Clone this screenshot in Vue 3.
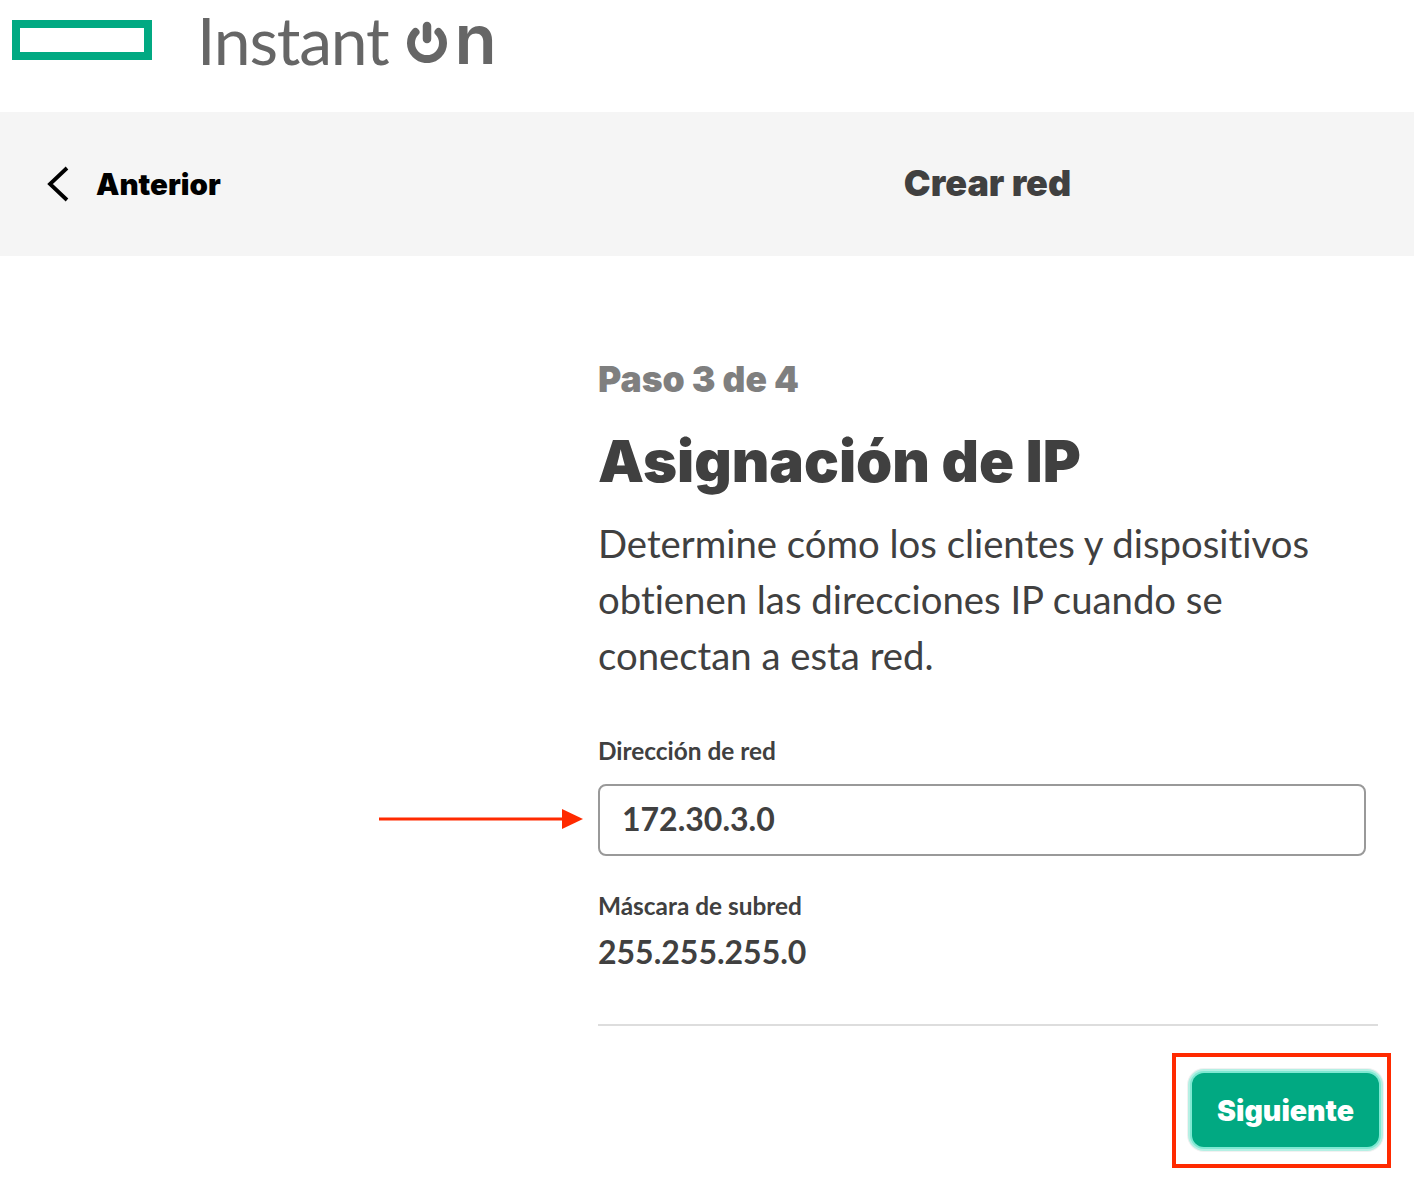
<script setup>
const pasoActual = 3
const pasosTotal = 4
</script>

<template>
  <div class="pagina">
    <header class="cabecera">
      <div class="logo-hpe"></div>
      <div class="marca">
        <span class="marca-texto">Instant</span>
        <svg class="marca-power" viewBox="0 0 40 42" width="40" height="42">
          <path d="M8.5 11 A16 16 0 1 0 31.5 11" fill="none" stroke="#666" stroke-width="8" stroke-linecap="round" />
          <path d="M20 5 V18" fill="none" stroke="#666" stroke-width="8.5" stroke-linecap="round" />
        </svg>
        <span class="marca-n">n</span>
      </div>
    </header>

    <nav class="barra">
      <div class="volver">
        <svg viewBox="0 0 24 38" width="24" height="38">
          <path d="M21 3 L4 19 L21 35" fill="none" stroke="#000" stroke-width="3.8" />
        </svg>
        <span>Anterior</span>
      </div>
      <div class="barra-titulo">Crear red</div>
    </nav>

    <main class="contenido">
      <div class="paso">Paso {{ pasoActual }} de {{ pasosTotal }}</div>
      <h1 class="titulo">Asignación de IP</h1>
      <p class="descripcion">
        Determine cómo los clientes y dispositivos<br />
        obtienen las direcciones IP cuando se<br />
        conectan a esta red.
      </p>

      <label class="etiqueta etiqueta-red">Dirección de red</label>
      <div class="campo-caja">
        <svg class="flecha" viewBox="0 0 204 22" width="204" height="22">
          <path d="M0 11 H184" stroke="#ff2a00" stroke-width="3" />
          <path d="M183 1 L204 11 L183 21 Z" fill="#ff2a00" />
        </svg>
        <input class="campo" value="172.30.3.0" />
      </div>

      <div class="etiqueta etiqueta-mascara">Máscara de subred</div>
      <div class="valor">255.255.255.0</div>

      <div class="pie">
        <button class="btn-siguiente">Siguiente</button>
        <div class="marco-rojo"></div>
      </div>
    </main>
  </div>
</template>

<style>
html, body { background: #fff; }
</style>

<style scoped>
.pagina {
  width: 1414px;
  height: 1202px;
  overflow: hidden;
  font-family: Lato, "Open Sans", sans-serif;
  font-variant-ligatures: none;
  color: #404040;
}
.cabecera {
  height: 112px;
  display: flex;
  align-items: flex-start;
  padding-left: 12px;
  box-sizing: border-box;
}
.logo-hpe {
  width: 140px;
  height: 40px;
  margin-top: 20px;
  border: 8px solid #01a982;
  box-sizing: border-box;
}
.marca {
  margin-left: 45px;
  display: flex;
  align-items: flex-start;
  color: #666;
}
.marca-texto {
  font-family: Lato, sans-serif;
  font-weight: 400;
  font-size: 66px;
  line-height: 80px;
  letter-spacing: -1.2px;
}
.marca-power {
  margin-left: 19px;
  margin-top: 21px;
}
.marca-n {
  font-family: Inter, sans-serif;
  font-weight: 600;
  font-size: 69px;
  line-height: 84px;
  margin-top: -3px;
  margin-left: 7px;
}
.barra {
  height: 144px;
  background: #f5f5f5;
  position: relative;
  display: flex;
  align-items: center;
  justify-content: center;
}
.volver {
  position: absolute;
  left: 46px;
  top: 53px;
  display: flex;
  align-items: center;
  gap: 26px;
  font-family: Inter, sans-serif;
  font-weight: 900;
  font-size: 29.5px;
  color: #000;
}
.barra-titulo {
  margin-left: 561px;
  margin-top: -3px;
  font-family: Inter, sans-serif;
  font-weight: 900;
  font-size: 36px;
  color: #404040;
}
.contenido {
  width: 780px;
  margin-left: 598px;
  padding-top: 100px;
}
.paso {
  font-family: Inter, sans-serif;
  font-weight: 900;
  font-size: 35.5px;
  line-height: 48px;
  color: #7f7f7f;
}
.titulo {
  margin: 20px 0 0;
  font-family: Inter, sans-serif;
  font-weight: 900;
  font-size: 58px;
  line-height: 74px;
  color: #404040;
}
.descripcion {
  margin: 17px 0 0;
  font-size: 38.3px;
  line-height: 56px;
  color: #404040;
}
.etiqueta {
  display: block;
  font-size: 24.4px;
  line-height: 32px;
  font-weight: 700;
  color: #404040;
}
.etiqueta-red { margin-top: 52px; }
.campo-caja {
  position: relative;
  margin-top: 17px;
  width: 768px;
}
.campo {
  display: block;
  width: 100%;
  height: 72px;
  box-sizing: border-box;
  border: 2px solid #999;
  border-radius: 8px;
  padding: 0 22px 3px;
  font-family: Lato, sans-serif;
  font-weight: 700;
  font-size: 32px;
  color: #404040;
  background: #fff;
  outline: none;
}
.flecha {
  position: absolute;
  left: -219px;
  top: 24px;
}
.etiqueta-mascara { margin-top: 34px; }
.valor {
  margin-top: 8px;
  font-weight: 700;
  font-size: 32px;
  line-height: 44px;
}
.pie {
  position: relative;
  margin-top: 50px;
  border-top: 2px solid #ddd;
  display: flex;
  justify-content: flex-end;
  padding-top: 47px;
}
.btn-siguiente {
  width: 187px;
  height: 74px;
  margin-right: -1px;
  border: none;
  border-radius: 12px;
  background: #01a982;
  box-shadow: 0 0 0 2px #7fe8d2, 0 0 0 4px #b5f0e4, 0 0 0 5px #f1f1f1;
  color: #fff;
  font-family: Inter, sans-serif;
  font-weight: 900;
  font-size: 28.5px;
}
.marco-rojo {
  position: absolute;
  left: 574px;
  top: 27px;
  width: 219px;
  height: 115px;
  box-sizing: border-box;
  border: 4px solid #ff2a00;
  pointer-events: none;
}
</style>
